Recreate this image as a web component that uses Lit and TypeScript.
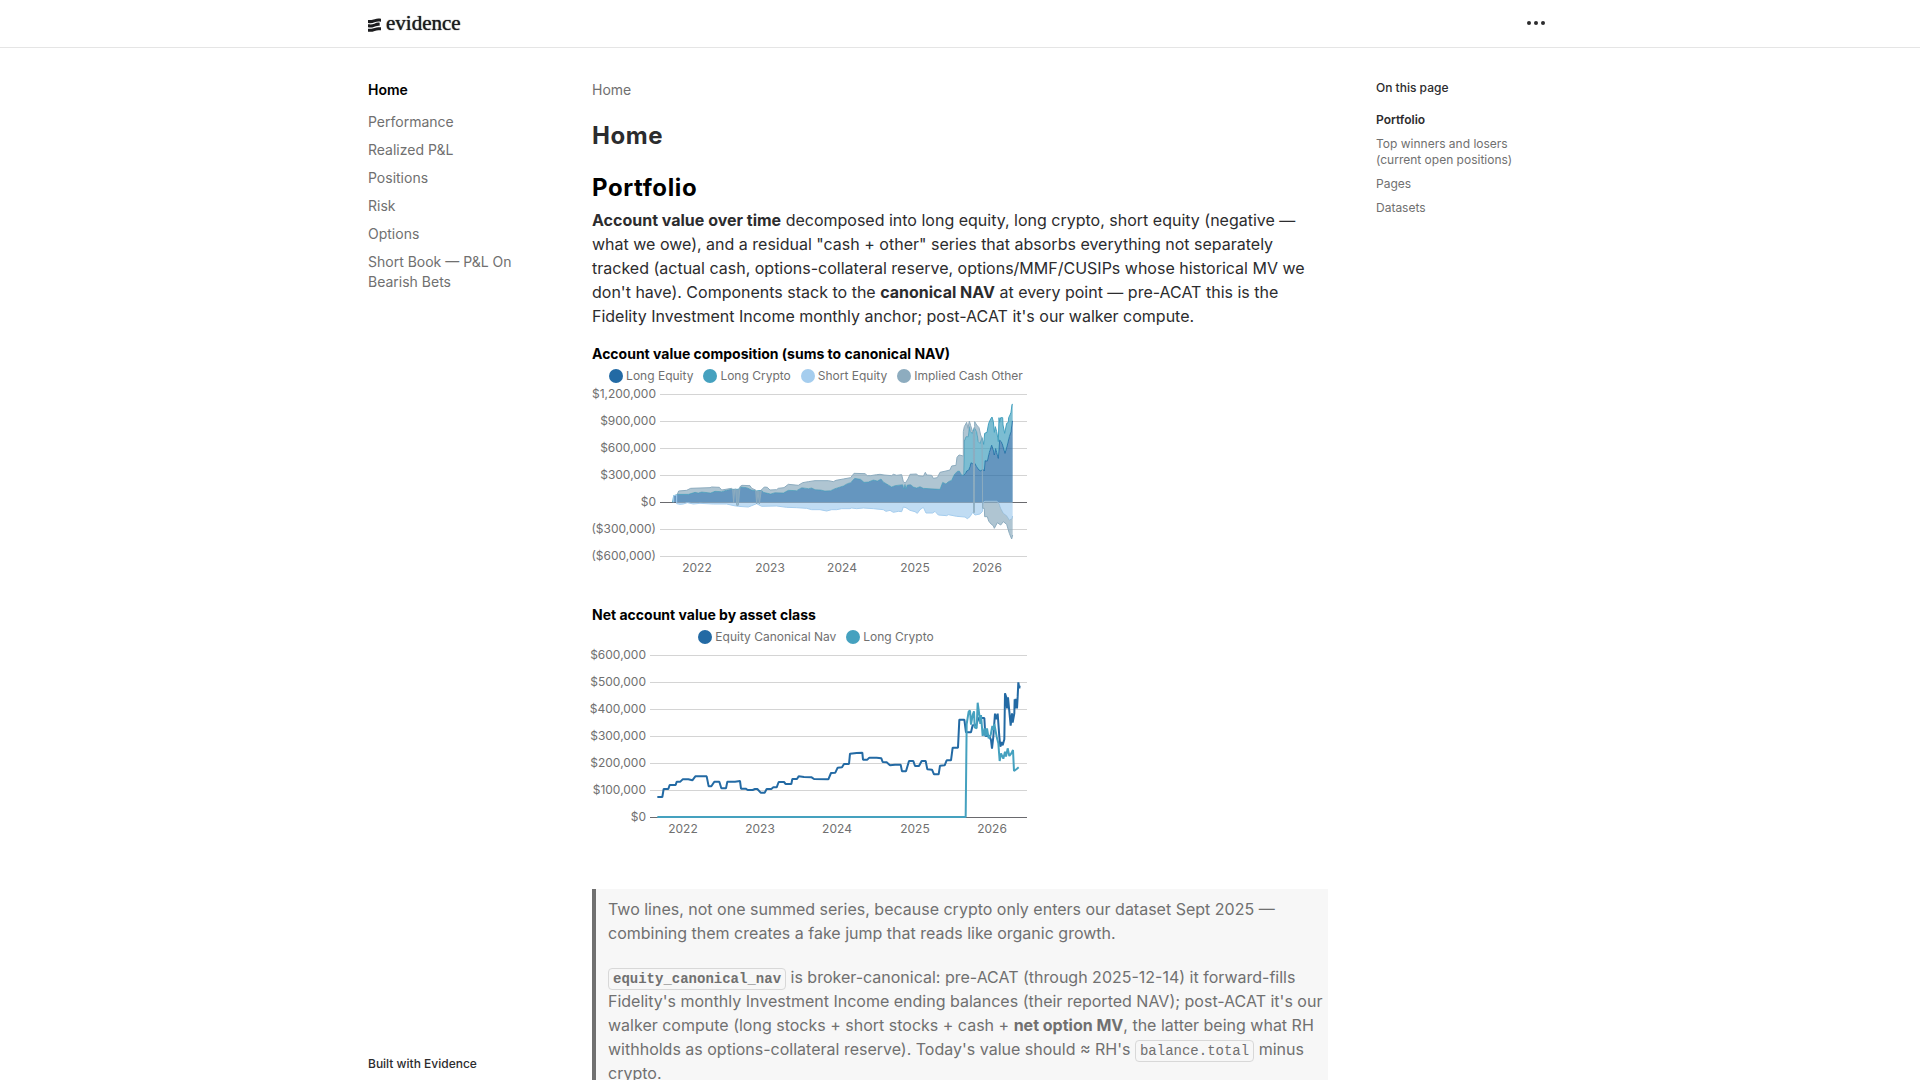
import { LitElement, html, svg, css } from "lit";
import { customElement, property } from "lit/decorators.js";

interface Series {
  name: string;
  color: string;
}

interface Tick {
  at: number;
  label: string;
}

const BLUE = "#236aa4";
const TEAL = "#45a1bf";
const SKY = "#a5cdee";
const SLATE = "#8dacbf";

const pageLinks = ["Performance", "Realized P&L", "Positions", "Risk", "Options", "Short Book — P&L On Bearish Bets"];
const tocLinks = ["Top winners and losers (current open positions)", "Pages", "Datasets"];

/* Traces are stored at three units per pixel. */
const longEquity =
  "281,482 290,480 292,478 325,478 345,472 355,474 365,471 392,474 405,469 425,470 445,464 462,463 475,463 482,456 500,458 515,465 530,468 545,466 550,472 572,477 585,473 610,474 625,466 650,467 665,458 685,461 695,459 705,464 722,465 735,468 752,467 765,461 790,453 802,446 812,443 824,430 842,433 852,442 865,441 880,435 892,438 903,432 910,441 925,450 935,456 945,452 968,449 971,461 975,448 978,461 982,450 992,449 1000,456 1010,459 1020,455 1030,460 1080,463 1088,442 1098,447 1105,440 1115,436 1122,420 1132,409 1138,408 1145,420 1151,420";
const longEquityLate =
  "1151,420 1156,416 1160,408 1166,405 1170,395 1173,383 1177,386 1182,381 1190,395 1197,405 1203,408 1208,402 1213,408 1215,377 1222,378 1228,352 1235,330 1240,345 1243,360 1247,340 1250,352 1255,370 1259,315 1264,320 1268,330 1275,355 1282,330 1288,305 1293,290 1297,258 1298,258";
const longCrypto =
  "1151,420 1153,318 1158,305 1165,305 1168,275 1171,290 1177,295 1183,278 1190,290 1195,320 1200,325 1206,308 1211,328 1214,295 1221,292 1226,265 1232,252 1236,246 1240,260 1243,292 1246,275 1250,290 1254,312 1255,320 1257,248 1259,262 1262,248 1268,248 1269,270 1274,295 1280,265 1285,262 1286,248 1290,240 1293,232 1296,208 1298,208";
const shortEquity =
  "290,506 300,508 310,507 322,503 340,507 360,505 400,507 440,507 462,512 475,514 505,516 515,512 530,506 545,514 590,513 620,517 650,518 680,520 695,524 720,524 740,528 755,524 770,524 785,521 810,521 815,519 830,521 850,519 880,521 910,524 918,529 930,526 940,532 955,529 965,530 970,516 978,518 990,526 1005,530 1012,535 1020,524 1030,517 1038,534 1058,534 1065,529 1075,540 1100,542 1105,539 1130,544 1155,546 1162,551 1170,545 1178,532 1185,540 1200,537 1207,530";
const shortEquityLate =
  "1210,502 1215,499 1250,499 1257,505 1262,520 1270,535 1280,542 1288,555 1295,552 1298,543";
const cashTop =
  "292,478 296,468 320,466 332,460 390,458 395,456 418,457 425,465 455,460 458,463 461,503 464,463 467,462 470,511 475,511 480,455 486,451 510,452 515,460 527,465 530,507 534,468 538,507 544,465 553,456 562,457 570,465 590,464 595,460 612,458 625,448 655,451 668,443 685,440 705,437 745,437 760,440 768,436 790,432 812,428 822,415 855,416 862,422 872,422 890,419 900,418 912,420 935,422 940,418 950,421 965,419 970,440 976,444 984,432 990,418 1010,417 1014,422 1030,424 1036,412 1040,420 1055,421 1060,430 1072,428 1080,412 1098,408 1110,405 1115,393 1128,391 1131,367 1137,360 1147,362 1150,364 1150,290 1153,275 1160,262 1164,280 1168,258 1172,272 1178,290 1180,290";
const cashMid = "1184,275 1184,260 1190,270 1197,278 1202,300 1206,310";
const cashLow =
  "1209,520 1213,520 1214,545 1222,545 1226,558 1234,568 1240,572 1243,580 1252,563 1262,570 1270,560 1280,568 1288,595 1295,612 1298,600";

const canonicalNav =
  "232,591 247,591 251,567 265,567 269,555 287,555 290,545 301,545 308,538 325,538 337,541 346,529 380,529 386,559 394,559 403,545 418,545 424,565 438,565 442,545 465,545 480,543 483,566 497,566 503,570 518,570 525,567 532,567 542,578 554,578 560,567 574,567 580,562 590,562 596,546 612,546 617,552 634,552 637,537 651,537 656,529 672,531 695,532 702,537 745,538 753,519 766,518 773,503 786,502 792,492 807,492 810,461 830,459 847,458 849,479 862,479 868,473 890,473 904,475 908,486 920,487 930,496 945,494 962,494 966,514 978,514 987,483 1000,483 1005,498 1017,498 1025,483 1037,483 1042,508 1056,509 1062,523 1076,523 1080,497 1094,496 1100,481 1113,481 1118,443 1134,443 1138,359 1153,359 1158,397 1173,397 1178,376 1188,376 1196,354 1213,354 1216,408 1228,408 1233,420 1236,446 1240,410 1245,341 1248,358 1253,341 1258,410 1261,440 1264,426 1268,436 1273,418 1275,280 1279,292 1281,325 1284,292 1288,335 1292,377 1296,340 1298,368 1303,340 1304,298 1309,325 1307,296 1311,325 1313,290 1315,247 1318,265 1319,257";
const cryptoLine =
  "232,651 1157,651 1160,372 1166,335 1170,332 1173,374 1178,345 1182,334 1184,382 1190,385 1193,308 1198,345 1201,372 1203,345 1208,408 1214,385 1217,408 1221,385 1226,415 1232,405 1237,378 1240,390 1243,372 1250,410 1255,430 1259,483 1263,460 1270,476 1275,455 1278,470 1283,445 1288,468 1294,460 1299,450 1302,513 1310,507 1316,502";

const reversed = (points: string) => points.split(" ").reverse().join(" ");

const area = (points: string, color: string) => svg`<polygon points=${points} fill=${color} fill-opacity="0.7"></polygon>`;
const line = (points: string, color: string, width: number) =>
  svg`<polyline points=${points} fill="none" stroke=${color} stroke-width=${width} stroke-linejoin="bevel"></polyline>`;

const compositionPlot = svg`
  <svg width="448" height="192" viewBox="36 147 1344 576">
    ${area(`278,502 ${longEquity} ${longEquityLate} 1298,502`, BLUE)}
    ${line(longEquityLate, BLUE, 3)}
    ${area(`${longCrypto} ${reversed(longEquityLate)}`, TEAL)}
    ${line(`278,502 ${longEquity}`, TEAL, 3)}
    ${line(longCrypto, TEAL, 3)}
    ${area(`290,502 ${shortEquity} ${shortEquityLate} 1298,502`, SKY)}
    ${line(`281,502 281,482 290,480 290,506 ${shortEquity} ${shortEquityLate}`, SKY, 3)}
    ${area(`${cashTop} 1180,278 ${reversed(longCrypto.split(" ").slice(0, 8).join(" "))} ${reversed(longEquity)}`, SLATE)}
    ${area(`${cashMid} 1206,308 1200,325 1195,320 1190,290 1184,278`, SLATE)}
    ${area(`${cashLow} ${reversed(shortEquityLate)}`, SLATE)}
    ${line(`${cashTop} 1181,533 1183,533 ${cashMid} 1208,520 ${cashLow}`, SLATE, 3)}
  </svg>`;

const assetPlot = svg`
  <svg width="448" height="192" viewBox="36 135 1344 576">
    ${line(canonicalNav, BLUE, 6)}
    ${line(cryptoLine, TEAL, 6)}
  </svg>`;

@customElement("evidence-chart")
export class EvidenceChart extends LitElement {
  @property() heading = "";
  @property({ attribute: false }) series: Series[] = [];
  @property({ attribute: false }) yLabels: string[] = [];
  @property({ attribute: false }) years: Tick[] = [];
  @property({ attribute: false }) plot: unknown = null;
  @property({ type: Number }) axisStart = 68;
  @property({ type: Number }) zeroIndex = 6;

  static styles = css`
    :host {
      display: block;
    }
    .chart {
      margin: 0;
      max-width: 448px;
      display: flex;
      flex-direction: column;
    }
    .title {
      font-size: 14px;
      line-height: 20px;
      font-weight: 700;
      color: #000;
      margin-bottom: 4px;
    }
    .legend {
      display: flex;
      justify-content: center;
      gap: 10px;
      margin: 0;
      padding: 0;
      list-style: none;
      font-size: 12px;
      line-height: 16px;
      color: #707070;
    }
    .item {
      display: flex;
      align-items: center;
      gap: 3px;
      white-space: nowrap;
    }
    .dot {
      width: 14px;
      height: 14px;
    }
    .canvas {
      display: block;
      overflow: visible;
    }
    .tick {
      font-size: 12px;
      fill: #707070;
    }
  `;

  render() {
    return html`
      <figure class="chart">
        <figcaption class="title">${this.heading}</figcaption>
        <ul class="legend">
          ${this.series.map(
            (s) => html`<li class="item">
              <svg class="dot" viewBox="0 0 14 14" aria-hidden="true"><circle cx="7" cy="7" r="7" fill=${s.color}></circle></svg>
              <span>${s.name}</span>
            </li>`,
          )}
        </ul>
        <svg class="canvas" width="448" height="192" viewBox="0 0 448 192" role="img" aria-label=${this.heading}>
          ${this.yLabels.map((label, i) => {
            const y = 10 + i * 27;
            const zero = i === this.zeroIndex;
            return svg`
              <rect x=${this.axisStart} y=${y} width=${435 - this.axisStart} height="1" fill=${zero ? "#6a6a6e" : "#d4d4d4"}></rect>
              <text class="tick" x=${this.axisStart - 4} y=${y + 4} text-anchor="end">${label}</text>`;
          })}
          ${this.plot}
          ${this.years.map((t) => svg`<text class="tick" x=${t.at} y="188" text-anchor="middle">${t.label}</text>`)}
        </svg>
      </figure>
    `;
  }
}

const years = (positions: number[]): Tick[] => positions.map((at, i) => ({ at, label: String(2022 + i) }));

@customElement("app-root")
export class AppRoot extends LitElement {
  static styles = css`
    :host {
      display: flex;
      flex-direction: column;
      height: 100vh;
      background: #fff;
      color: #2c2c2e;
      font-family: Inter, "Liberation Sans", sans-serif;
    }
    a {
      color: inherit;
      text-decoration: none;
    }
    .header {
      flex: none;
      border-bottom: 1px solid #e5e5e5;
    }
    .bar,
    .columns {
      box-sizing: border-box;
      width: 100%;
      max-width: 1280px;
      margin: 0 auto;
      padding: 0 48px;
    }
    .bar {
      display: flex;
      align-items: center;
      justify-content: space-between;
      height: 47px;
      padding-bottom: 1px;
    }
    .brand {
      display: flex;
      align-items: center;
      gap: 5px;
      color: #1c1c1e;
      font-family: "Liberation Serif", serif;
      font-size: 21px;
      line-height: 24px;
      text-shadow: 0 0 1px #1c1c1e;
    }
    .mark {
      width: 13px;
      height: 14px;
      margin-top: 4px;
    }
    .menu {
      display: flex;
      padding: 4px;
      border: 0;
      background: none;
      color: #2c2c2e;
    }
    .columns {
      display: flex;
      flex: 1;
      min-height: 0;
    }
    .sidebar {
      flex: none;
      box-sizing: border-box;
      width: 192px;
      padding: 32px 32px 8px 0;
      display: flex;
      flex-direction: column;
      justify-content: space-between;
      font-size: 14px;
      line-height: 20px;
      color: #707070;
    }
    .links {
      display: flex;
      flex-direction: column;
      gap: 8px;
    }
    .current {
      font-weight: 600;
      color: #000;
      margin-bottom: 4px;
    }
    .built {
      font-size: 12px;
      line-height: 16px;
      font-weight: 500;
      color: #2c2c2e;
    }
    .article {
      flex: 1;
      min-width: 0;
      padding: 32px 48px 32px 32px;
      overflow-y: auto;
      scrollbar-width: none;
      font-size: 16px;
      line-height: 24px;
    }
    .crumb {
      display: block;
      font-size: 14px;
      line-height: 20px;
      color: #707070;
    }
    h1,
    h2 {
      margin: 20px 0 0;
      font-size: 24px;
      line-height: 32px;
      font-weight: 700;
      letter-spacing: 0.025em;
    }
    h2 {
      color: #000;
    }
    p {
      margin: 0;
    }
    .intro {
      margin: 4px 0 16px;
    }
    strong {
      font-weight: 700;
    }
    .charts {
      display: flex;
      flex-direction: column;
      gap: 29px;
    }
    blockquote {
      margin: 52px 0 0;
      padding: 8px 0 8px 12px;
      border-left: 4px solid #707070;
      background: #f7f7f7;
      color: #707070;
      display: flex;
      flex-direction: column;
      gap: 20px;
    }
    code {
      padding: 2px 4px;
      border: 1px solid #d8d8d8;
      border-radius: 4px;
      font-family: "Liberation Mono", monospace;
      font-size: 14px;
      line-height: 16px;
    }
    .toc {
      flex: none;
      width: 176px;
      padding-top: 32px;
      font-size: 12px;
      line-height: 16px;
      color: #707070;
    }
    .toc .links {
      margin-top: 16px;
      max-width: 144px;
    }
    .tocTitle {
      font-weight: 500;
      color: #2c2c2e;
    }
    .active {
      font-weight: 600;
      color: #2c2c2e;
    }
  `;

  render() {
    return html`
      <header class="header">
        <div class="bar">
          <a class="brand" href="#home">
            <svg class="mark" viewBox="0 0 39 42" fill="#1c1c1e" aria-hidden="true">
              <path d="M0 6C7 6 12 7 20 4C26 1 31 1 39 2V11C31 10 27 10 20 13C13 16 7 16 0 15Z"></path>
              <path d="M0 19C7 19 12 20 19 17C25 14 29 13 35 14V23C29 23 26 23 19 26C12 29 7 29 0 28Z"></path>
              <path d="M0 32C7 32 12 33 20 30C26 27 31 27 39 28V37C31 36 27 36 20 39C13 42 7 42 0 41Z"></path>
            </svg>
            <span>evidence</span>
          </a>
          <button class="menu" type="button" aria-label="Menu">
            <svg width="24" height="24" viewBox="0 0 24 24" fill="currentColor">
              <circle cx="5" cy="12" r="2"></circle>
              <circle cx="12" cy="12" r="2"></circle>
              <circle cx="19" cy="12" r="2"></circle>
            </svg>
          </button>
        </div>
      </header>
      <div class="columns">
        <aside class="sidebar">
          <nav class="links">
            <a class="current" href="#home">Home</a>
            ${pageLinks.map((l) => html`<a href="#page">${l}</a>`)}
          </nav>
          <a class="built" href="#evidence">Built with Evidence</a>
        </aside>
        <main class="article">
          <a class="crumb" href="#home">Home</a>
          <h1>Home</h1>
          <h2>Portfolio</h2>
          <p class="intro">
            <strong>Account value over time</strong> decomposed into long equity, long crypto, short equity (negative —
            what we owe), and a residual "cash + other" series that absorbs everything not separately tracked (actual
            cash, options-collateral reserve, options/MMF/CUSIPs whose historical MV we don't have). Components stack to
            the <strong>canonical NAV</strong> at every point — pre-ACAT this is the Fidelity Investment Income monthly
            anchor; post-ACAT it's our walker compute.
          </p>
          <div class="charts">
            <evidence-chart
              heading="Account value composition (sums to canonical NAV)"
              .series=${[
                { name: "Long Equity", color: BLUE },
                { name: "Long Crypto", color: TEAL },
                { name: "Short Equity", color: SKY },
                { name: "Implied Cash Other", color: SLATE },
              ]}
              .yLabels=${["$1,200,000", "$900,000", "$600,000", "$300,000", "$0", "($300,000)", "($600,000)"]}
              .years=${years([105, 178, 250, 323, 395])}
              .plot=${compositionPlot}
              .axisStart=${68}
              .zeroIndex=${4}
            ></evidence-chart>
            <evidence-chart
              heading="Net account value by asset class"
              .series=${[
                { name: "Equity Canonical Nav", color: BLUE },
                { name: "Long Crypto", color: TEAL },
              ]}
              .yLabels=${["$600,000", "$500,000", "$400,000", "$300,000", "$200,000", "$100,000", "$0"]}
              .years=${years([91, 168, 245, 323, 400])}
              .plot=${assetPlot}
              .axisStart=${58}
            ></evidence-chart>
          </div>
          <blockquote>
            <p>
              Two lines, not one summed series, because crypto only enters our dataset Sept 2025 — combining them
              creates a fake jump that reads like organic growth.
            </p>
            <p>
              <strong><code>equity_canonical_nav</code></strong> is broker-canonical: pre-ACAT (through 2025-12-14) it
              forward-fills Fidelity's monthly Investment Income ending balances (their reported NAV); post-ACAT it's
              our walker compute (long stocks + short stocks + cash + <strong>net option MV</strong>, the latter being
              what RH withholds as options-collateral reserve). Today's value should ≈ RH's
              <code>balance.total</code> minus crypto.
            </p>
          </blockquote>
        </main>
        <aside class="toc">
          <div class="tocTitle">On this page</div>
          <nav class="links">
            <a class="active" href="#portfolio">Portfolio</a>
            ${tocLinks.map((l) => html`<a href="#section">${l}</a>`)}
          </nav>
        </aside>
      </div>
    `;
  }
}
